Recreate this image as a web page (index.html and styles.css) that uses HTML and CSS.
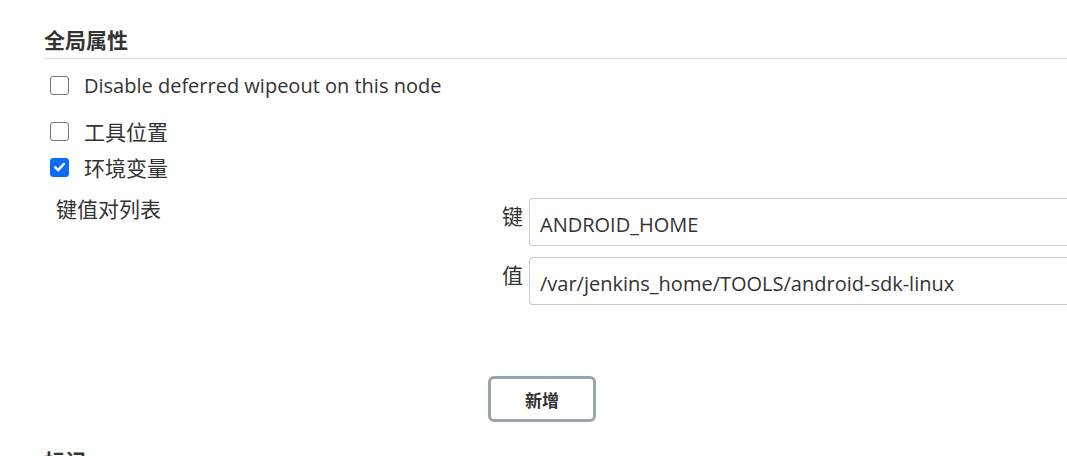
FILE: index.html
```html
<!DOCTYPE html>
<html lang="zh">
<head>
<meta charset="utf-8">
<link rel="stylesheet" href="styles.css">
</head>
<body>
<div class="page">
  <h2 class="section-title">全局属性</h2>
  <label class="check-row first">
    <span class="box"></span>
    <span class="check-label">Disable deferred wipeout on this node</span>
  </label>
  <label class="check-row second">
    <span class="box"></span>
    <span class="check-label cjk">工具位置</span>
  </label>
  <label class="check-row third">
    <span class="box checked"><svg viewBox="0 0 18 18" width="18" height="18"><path d="M4.5 9.3 L7.6 12.3 L13.6 5.8" fill="none" stroke="#fff" stroke-width="2.6" stroke-linecap="round" stroke-linejoin="round"/></svg></span>
    <span class="check-label cjk">环境变量</span>
  </label>
  <div class="kv">
    <div class="kv-name">键值对列表</div>
    <div class="kv-main">
      <div class="kv-row">
        <span class="kv-label">键</span>
        <div class="field">ANDROID_HOME</div>
      </div>
      <div class="kv-row">
        <span class="kv-label">值</span>
        <div class="field">/var/jenkins_home/TOOLS/android-sdk-linux</div>
      </div>
    </div>
  </div>
  <div class="actions">
    <button class="btn">新增</button>
  </div>
  <h2 class="section-title next">标记</h2>
</div>
</body>
</html>
```

FILE: styles.css
```css
html, body {
  margin: 0;
  padding: 0;
  background: #fff;
}
body {
  font-family: "Open Sans", "Noto Sans CJK SC", sans-serif;
  color: #333;
  overflow: hidden;
}
.page {
  padding-left: 44px;
}
.section-title {
  margin: 0;
  padding-top: 24px;
  height: 34px;
  box-sizing: content-box;
  font-size: 21px;
  font-weight: 700;
  line-height: 30px;
  border-bottom: 1px solid #e0e0e0;
  font-family: "Noto Sans CJK SC", sans-serif;
  color: #333;
}
.section-title.next {
  border-bottom: none;
  padding-top: 23px;
}
.check-row {
  display: flex;
  align-items: center;
  gap: 15px;
  padding-left: 6px;
  height: 36px;
}
.check-row.first { margin-top: 8px; }
.check-row.second { margin-top: 10px; }
.check-row.third { margin-top: 0; }
.box {
  width: 19px;
  height: 19px;
  box-sizing: border-box;
  border: 1px solid #767676;
  border-radius: 3px;
  background: #fff;
  display: flex;
  align-items: center;
  justify-content: center;
}
.box.checked {
  background: #0b6cf5;
  border-color: #0b6cf5;
}
.check-label {
  font-size: 20px;
  font-family: "Open Sans", "Noto Sans CJK SC", sans-serif;
}
.check-label.cjk {
  font-size: 21px;
  font-family: "Noto Sans CJK SC", sans-serif;
}
.kv {
  display: flex;
  margin-top: 13px;
}
.kv-name {
  width: 446px;
  padding-left: 12px;
  box-sizing: border-box;
  font-size: 21px;
  line-height: 26px;
  font-family: "Noto Sans CJK SC", sans-serif;
  margin-top: -3px;
}
.kv-main {
  flex: 1;
  display: flex;
  flex-direction: column;
  gap: 11px;
}
.kv-row {
  display: flex;
  gap: 6px;
  padding-left: 12px;
}
.kv-label {
  font-size: 21px;
  line-height: 26px;
  padding-top: 4px;
  font-family: "Noto Sans CJK SC", sans-serif;
}
.field {
  flex: 1;
  height: 48px;
  box-sizing: border-box;
  border: 1px solid #ccc;
  border-right: none;
  border-radius: 4px 0 0 4px;
  padding: 0 0 0 10px;
  display: flex;
  align-items: center;
  padding-top: 4px;
  font-size: 20px;
}
.actions {
  display: flex;
  padding-left: 444px;
  margin-top: 71px;
}
.btn {
  width: 108px;
  height: 46px;
  border: 3px solid #9aa5ae;
  border-radius: 6px;
  background: #fff;
  color: #333;
  font-family: "Noto Sans CJK SC", sans-serif;
  font-weight: 700;
  font-size: 17px;
  padding: 0;
}
```
